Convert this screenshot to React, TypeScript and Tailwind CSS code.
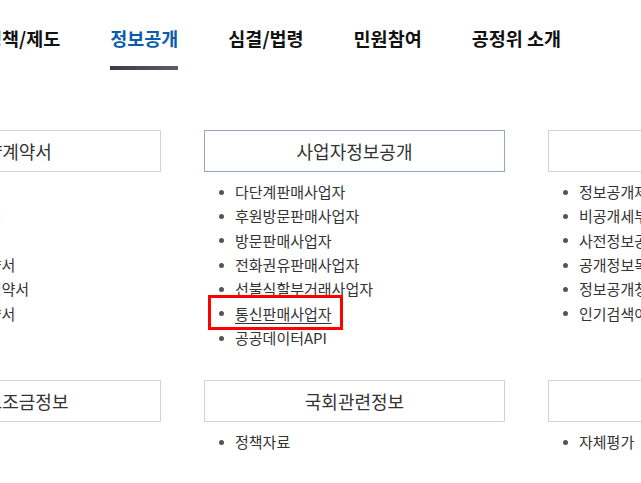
import React from "react";

type Col = {
  title: string;
  active?: boolean;
  items: string[];
};

const topRow: Col[] = [
  {
    title: "협약계약서",
    items: [
      "표준약관",
      "표준하도급계약서",
      "표준계약서",
      "표준유통거래계약서",
      "표준하도급거래계약서",
      "가맹사업거래계약서",
    ],
  },
  {
    title: "사업자정보공개",
    active: true,
    items: [
      "다단계판매사업자",
      "후원방문판매사업자",
      "방문판매사업자",
      "전화권유판매사업자",
      "선불식할부거래사업자",
      "통신판매사업자",
      "공공데이터API",
    ],
  },
  {
    title: "정보공개제도",
    items: [
      "정보공개제도",
      "비공개세부기준",
      "사전정보공표",
      "공개정보목록",
      "정보공개청구",
      "인기검색어",
    ],
  },
];

const bottomRow: Col[] = [
  { title: "국고보조금정보", items: ["보조금현황"] },
  { title: "국회관련정보", items: ["정책자료"] },
  { title: "평가정보", items: ["자체평가"] },
];

const navItems = ["정책/제도", "정보공개", "심결/법령", "민원참여", "공정위 소개"];

function Column({ col }: { col: Col }) {
  return (
    <div className="flex flex-col">
      <div
        className={
          col.active
            ? "h-[42px] border border-[#93a8c4] flex items-center justify-center text-[18px] text-[#333]"
            : "h-[42px] border border-[#cfd2dc] flex items-center justify-center text-[18px] text-[#333]"
        }
      >
        {col.title}
      </div>
      <ul className="mt-[8px]">
        {col.items.map((it) => {
          const marked = it === "통신판매사업자";
          return (
            <li
              key={it}
              className="relative h-[24.33px] flex items-center pl-[15px] text-[15px] text-[#333] whitespace-nowrap"
            >
              <span className="w-[5px] h-[5px] rounded-full bg-[#555] mr-[11px] shrink-0" />
              <span className={marked ? "underline underline-offset-[3px]" : ""}>{it}</span>
              {marked && (
                <span className="absolute left-[4px] top-[-7px] w-[135px] h-[35px] border-[3px] border-[#ff0000]" />
              )}
            </li>
          );
        })}
      </ul>
    </div>
  );
}

export default function App() {
  return (
    <div className="w-[641px] h-[483px] overflow-hidden bg-white font-['Noto_Sans_CJK_KR','Noto_Sans',sans-serif]">
      <nav className="flex ml-[-15px] gap-[50px] h-[70px]">
        {navItems.map((n) => {
          const active = n === "정보공개";
          return (
            <div key={n} className="flex flex-col pt-[27px] shrink-0">
              <div
                className={
                  active
                    ? "h-[22px] leading-[22px] text-[18.5px] font-bold text-[#0b5cad] whitespace-nowrap"
                    : "h-[22px] leading-[22px] text-[18.5px] font-bold text-[#111] whitespace-nowrap"
                }
              >
                {n}
              </div>
              <div
                className={
                  active
                    ? "mt-[17px] h-[4px] bg-gradient-to-r from-[#393c46] to-[#5a5e6a]"
                    : "mt-[17px] h-[4px]"
                }
              />
            </div>
          );
        })}
      </nav>
      <div className="mt-[60px] ml-[-140px] grid grid-cols-[301px_301px_301px] gap-x-[43px] gap-y-[30px]">
        {topRow.map((c) => (
          <Column key={c.title} col={c} />
        ))}
        {bottomRow.map((c) => (
          <Column key={c.title} col={c} />
        ))}
      </div>
    </div>
  );
}
